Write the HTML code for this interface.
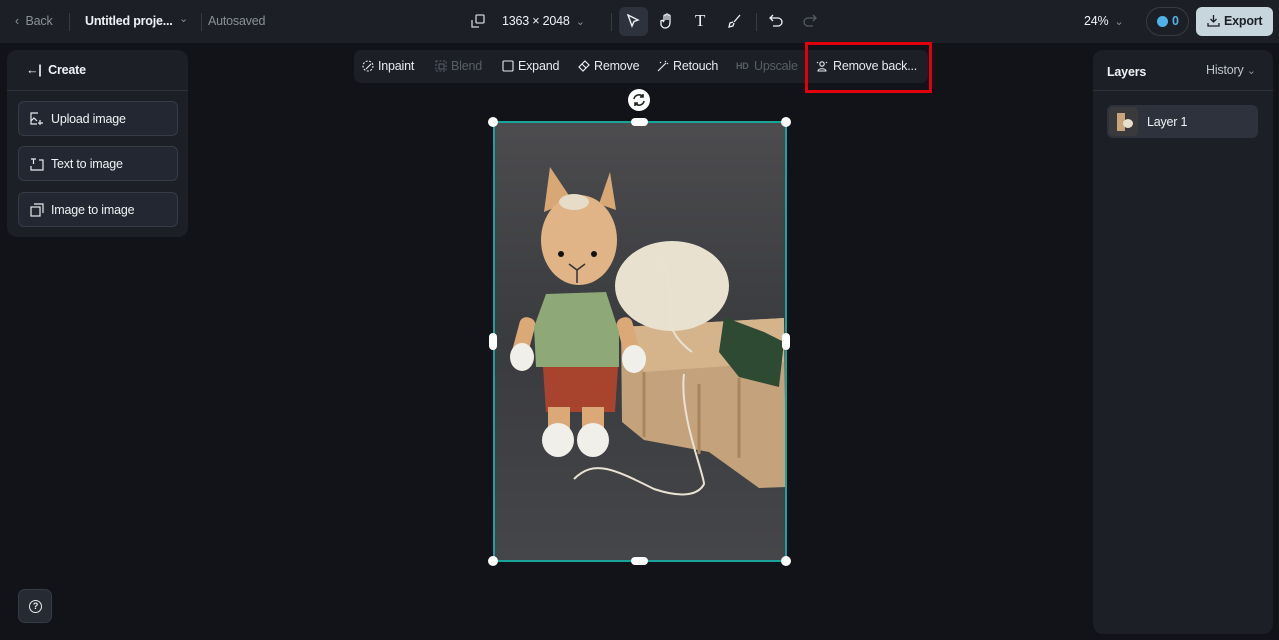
<!DOCTYPE html>
<html><head><meta charset="utf-8"><style>
*{box-sizing:border-box;margin:0;padding:0}
body{width:1279px;height:640px;background:#111318;font-family:"Liberation Sans",sans-serif;color:#e8eaee;position:relative;overflow:hidden;font-size:12.5px;letter-spacing:-0.2px}
.top{position:absolute;left:0;top:0;width:1279px;height:43px;background:#1c1f26}
.abs{position:absolute}
.t{position:absolute;white-space:nowrap}
.panel{position:absolute;background:#1c1f26;border-radius:10px}
.btn{position:absolute;left:18px;width:160px;height:35px;border:1px solid #363b46;border-radius:6px;background:#232731}
.btn span{position:absolute;left:32px;top:10px;color:#f0f2f5}
.btn svg{position:absolute;left:11px;top:10px}
.tb{position:absolute;top:50px;height:33px;background:#1c1f26;border-radius:7px}
.ti{position:absolute;top:59px;color:#e8eaee}
.ic{position:absolute;top:60px}
.dis{color:#585d68}
</style></head><body>
<div class="top"></div>
<div class="t" style="left:15px;top:14px;color:#8a8f99">‹&nbsp; Back</div>
<div class="abs" style="left:69px;top:13px;width:1px;height:18px;background:#363b46"></div>
<div class="t" style="left:85px;top:14px;font-weight:bold;color:#f0f2f5">Untitled proje...</div>
<div class="t" style="left:179px;top:12px;color:#8a8f99;font-size:11px">⌄</div>
<div class="abs" style="left:201px;top:13px;width:1px;height:18px;background:#363b46"></div>
<div class="t" style="left:208px;top:14px;color:#8a8f99">Autosaved</div>
<svg class="abs" style="left:471px;top:14px" width="14" height="14" viewBox="0 0 14 14" fill="none" stroke="#cfd3da" stroke-width="1.3"><rect x="5" y="1" width="8" height="8" rx="1"/><path d="M1 6v7h7"/></svg>
<div class="t" style="left:502px;top:14px;color:#f0f2f5">1363 × 2048 <span style="color:#8a8f99;font-size:11px">&nbsp;⌄</span></div>
<div class="abs" style="left:611px;top:13px;width:1px;height:18px;background:#363b46"></div>
<div class="abs" style="left:619px;top:7px;width:29px;height:29px;background:#2e323c;border-radius:6px"></div>
<svg class="abs" style="left:626px;top:14px" width="14" height="14" viewBox="0 0 14 14" fill="none" stroke="#f0f2f5" stroke-width="1.4"><path d="M2 1l10 5-4 1.5L6 12z"/></svg>
<svg class="abs" style="left:660px;top:13px" width="14" height="16" viewBox="0 0 14 16" fill="none" stroke="#f0f2f5" stroke-width="1.3"><path d="M4 8V3a1 1 0 012 0v4V2a1 1 0 012 0v5V3a1 1 0 012 0v6c0 4-2 6-5 6-2 0-3-1-4-3L1 9a1 1 0 012-1l1 1"/></svg>
<div class="t" style="left:695px;top:11px;font-size:17px;color:#f0f2f5;font-family:'Liberation Serif',serif">T</div>
<svg class="abs" style="left:727px;top:13px" width="15" height="15" viewBox="0 0 15 15" fill="none" stroke="#f0f2f5" stroke-width="1.3"><path d="M13 2L7 9M6 9l-3 1-1 4 4-1 1-3"/></svg>
<div class="abs" style="left:756px;top:13px;width:1px;height:18px;background:#363b46"></div>
<svg class="abs" style="left:769px;top:14px" width="15" height="14" viewBox="0 0 15 14" fill="none" stroke="#f0f2f5" stroke-width="1.3"><path d="M4 1L1 4l3 3M1 4h8a4 4 0 010 8H4"/></svg>
<svg class="abs" style="left:802px;top:14px" width="15" height="14" viewBox="0 0 15 14" fill="none" stroke="#555a65" stroke-width="1.3"><path d="M11 1l3 3-3 3M14 4H6a4 4 0 000 8h5"/></svg>
<div class="t" style="left:1084px;top:14px;color:#f0f2f5">24% <span style="color:#8a8f99;font-size:11px">&nbsp;⌄</span></div>
<div class="abs" style="left:1146px;top:7px;width:43px;height:29px;border:1px solid #363b46;border-radius:15px"></div>
<div class="abs" style="left:1157px;top:16px;width:11px;height:11px;border-radius:50%;background:#4fb3e8"></div>
<div class="t" style="left:1172px;top:14px;color:#4fb3e8;font-weight:bold">0</div>
<div class="abs" style="left:1196px;top:7px;width:77px;height:29px;background:#c7d5dd;border-radius:6px"></div>
<svg class="abs" style="left:1207px;top:14px" width="13" height="13" viewBox="0 0 13 13" fill="none" stroke="#1c1f26" stroke-width="1.3"><path d="M6.5 1v7M3.5 5l3 3 3-3M1 9v3h11V9"/></svg>
<div class="t" style="left:1224px;top:14px;color:#1c1f26;font-weight:bold">Export</div>

<div class="panel" style="left:7px;top:50px;width:181px;height:187px"></div>
<div class="abs" style="left:7px;top:90px;width:181px;height:1px;background:#2e323c"></div>
<div class="t" style="left:26px;top:63px;font-weight:bold;color:#f0f2f5">←|&nbsp; Create</div>
<div class="btn" style="top:101px"><svg width="14" height="14" viewBox="0 0 14 14" fill="none" stroke="#e8eaee" stroke-width="1.2"><path d="M8 1H1v11h6M1 9l3-3 3 3M10 8v5M8 11h5"/></svg><span>Upload image</span></div>
<div class="btn" style="top:146px"><svg width="14" height="14" viewBox="0 0 14 14" fill="none" stroke="#e8eaee" stroke-width="1.2"><path d="M1 2h5M3.5 2v5M1 9v4h12V3H9"/></svg><span>Text to image</span></div>
<div class="btn" style="top:192px"><svg width="14" height="14" viewBox="0 0 14 14" fill="none" stroke="#e8eaee" stroke-width="1.2"><rect x="1" y="4" width="9" height="9"/><path d="M4 1h9v9"/></svg><span>Image to image</span></div>
<div class="abs" style="left:18px;top:589px;width:34px;height:34px;background:#262a33;border:1px solid #363b46;border-radius:7px"></div>
<div class="abs" style="left:29px;top:600px;width:13px;height:13px;border:1.4px solid #e8eaee;border-radius:50%;font-size:9px;text-align:center;line-height:10px;font-weight:bold">?</div>

<div class="tb" style="left:354px;width:574px"></div>
<svg class="ic" style="left:362px" width="12" height="12" viewBox="0 0 12 12" fill="none" stroke="#e8eaee" stroke-width="1.1"><circle cx="6" cy="6" r="5" stroke-dasharray="2 1.5"/><path d="M4 9l5-5"/></svg>
<div class="ti" style="left:378px">Inpaint</div>
<svg class="ic" style="left:435px" width="12" height="12" viewBox="0 0 12 12" fill="none" stroke="#585d68" stroke-width="1.1"><rect x="1" y="1" width="10" height="10" stroke-dasharray="2 1.5"/><rect x="4" y="4" width="5" height="5"/></svg>
<div class="ti dis" style="left:451px">Blend</div>
<svg class="ic" style="left:502px" width="12" height="12" viewBox="0 0 12 12" fill="none" stroke="#e8eaee" stroke-width="1.1"><rect x="1" y="1" width="10" height="10" rx="1"/></svg>
<div class="ti" style="left:518px">Expand</div>
<svg class="ic" style="left:578px" width="12" height="12" viewBox="0 0 12 12" fill="none" stroke="#e8eaee" stroke-width="1.2"><path d="M7 1l4 4-6 6-4-4z M4 4l4 4"/></svg>
<div class="ti" style="left:594px">Remove</div>
<svg class="ic" style="left:657px" width="12" height="12" viewBox="0 0 12 12" fill="none" stroke="#e8eaee" stroke-width="1.2"><path d="M1 11l8-8M8 1l1 1M11 4l-1-1M3 2l1 1"/></svg>
<div class="ti" style="left:673px">Retouch</div>
<div class="ti dis" style="left:736px;font-size:9px;top:61px;font-weight:bold">HD</div>
<div class="ti dis" style="left:754px">Upscale</div>
<svg class="ic" style="left:816px" width="12" height="12" viewBox="0 0 12 12" fill="none" stroke="#e8eaee" stroke-width="1.1"><circle cx="6" cy="4" r="2.2"/><path d="M2 11c0-3 8-3 8 0zM1 2l1 1M11 2l-1 1"/></svg>
<div class="ti" style="left:833px">Remove back...</div>
<div class="abs" style="left:805px;top:42px;width:127px;height:51px;border:3px solid #e0000b"></div>

<div class="panel" style="left:1093px;top:50px;width:180px;height:584px"></div>
<div class="abs" style="left:1093px;top:90px;width:180px;height:1px;background:#2e323c"></div>
<div class="t" style="left:1107px;top:65px;font-weight:bold;color:#f0f2f5">Layers</div>
<div class="t" style="left:1206px;top:63px;color:#c0c4cc">History <span style="font-size:11px;color:#8a8f99">⌄</span></div>
<div class="abs" style="left:1107px;top:105px;width:151px;height:33px;background:#2e323c;border-radius:6px"></div>
<div class="abs" style="left:1109px;top:107px;width:29px;height:29px;background:#3a3a3c;border-radius:5px;overflow:hidden"><div style="position:absolute;left:8px;top:6px;width:8px;height:18px;background:#c9a57e"></div><div style="position:absolute;left:14px;top:12px;width:10px;height:9px;border-radius:50%;background:#e8dfcc"></div></div>
<div class="t" style="left:1147px;top:115px;color:#f0f2f5">Layer 1</div>

<svg class="abs" style="left:494px;top:122px" width="292" height="439" viewBox="0 0 292 439">
<defs><linearGradient id="bg" x1="0" y1="0" x2="0" y2="1"><stop offset="0" stop-color="#4c4c4f"/><stop offset=".5" stop-color="#3a3b3e"/><stop offset="1" stop-color="#454649"/></linearGradient></defs>
<rect width="292" height="439" fill="url(#bg)"/>
<path d="M127 205L290 196 292 365 265 366 215 330 150 318 128 300z" fill="#c4a27c"/>
<path d="M127 205L290 196 290 240 150 250z" fill="#d5b48c"/>
<path d="M150 250v65M205 262v70M245 256v80" stroke="#a8875f" stroke-width="3"/>
<ellipse cx="178" cy="164" rx="57" ry="45" fill="#e9e1cf"/>
<path d="M230 195l40 15 20 10-5 45-40-10-20-25z" fill="#2f4a33"/>
<path d="M50 90L56 45 78 78zM105 82L116 50 122 88z" fill="#d7a776"/>
<ellipse cx="85" cy="118" rx="38" ry="45" fill="#e0b487"/>
<ellipse cx="80" cy="80" rx="15" ry="8" fill="#e6dcc8"/>
<circle cx="67" cy="132" r="3" fill="#111"/><circle cx="100" cy="132" r="3" fill="#111"/>
<path d="M75 142l8 6 8-6M83 148v13" stroke="#333" stroke-width="1.5" fill="none"/>
<rect x="22" y="195" width="16" height="40" rx="7" fill="#dba878" transform="rotate(15 30 215)"/>
<rect x="126" y="195" width="16" height="40" rx="7" fill="#dba878" transform="rotate(-15 134 215)"/>
<path d="M52 172L112 170 125 210 125 245 42 245 40 205z" fill="#8ea878"/>
<path d="M49 245h75l-3 45H52z" fill="#a8442e"/>
<rect x="54" y="285" width="22" height="25" fill="#dba878"/><rect x="88" y="285" width="22" height="25" fill="#dba878"/>
<ellipse cx="64" cy="318" rx="16" ry="17" fill="#f1efea"/><ellipse cx="99" cy="318" rx="16" ry="17" fill="#f1efea"/>
<ellipse cx="28" cy="235" rx="12" ry="14" fill="#f1efea"/><ellipse cx="140" cy="237" rx="12" ry="14" fill="#f1efea"/>
<path d="M168 140c20 40-10 60 30 90M190 252c-5 40 20 100 20 110-5 10-20 15-50 5-40-20-60-30-80-10" stroke="#e8e2d2" stroke-width="2" fill="none"/>
</svg>
<div class="abs" style="left:493px;top:121px;width:294px;height:441px;border:2px solid #1aa39a"></div>
<div class="abs" style="left:488px;top:117px;width:10px;height:10px;border-radius:50%;background:#fff"></div>
<div class="abs" style="left:781px;top:117px;width:10px;height:10px;border-radius:50%;background:#fff"></div>
<div class="abs" style="left:488px;top:556px;width:10px;height:10px;border-radius:50%;background:#fff"></div>
<div class="abs" style="left:781px;top:556px;width:10px;height:10px;border-radius:50%;background:#fff"></div>
<div class="abs" style="left:631px;top:118px;width:17px;height:8px;border-radius:4px;background:#fff"></div>
<div class="abs" style="left:631px;top:557px;width:17px;height:8px;border-radius:4px;background:#fff"></div>
<div class="abs" style="left:489px;top:333px;width:8px;height:17px;border-radius:4px;background:#fff"></div>
<div class="abs" style="left:782px;top:333px;width:8px;height:17px;border-radius:4px;background:#fff"></div>
<div class="abs" style="left:628px;top:89px;width:22px;height:22px;border-radius:50%;background:#fff"></div>
<svg class="abs" style="left:632px;top:93px" width="14" height="14" viewBox="0 0 14 14" fill="none" stroke="#222" stroke-width="1.6"><path d="M2 6a5 5 0 019-2M12 8a5 5 0 01-9 2M11 1v3H8M3 13v-3h3"/></svg>
</body></html>
